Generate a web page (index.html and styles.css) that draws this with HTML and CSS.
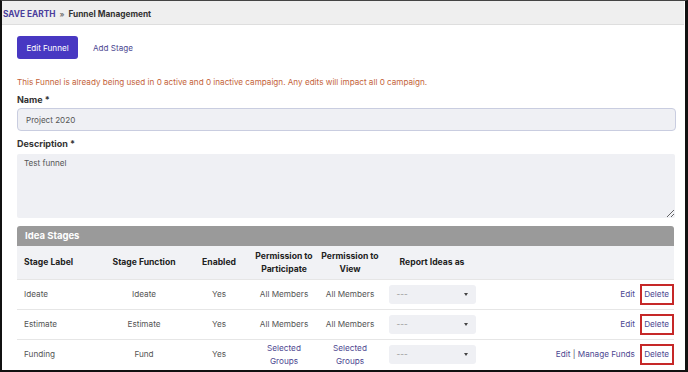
FILE: index.html
```html
<!DOCTYPE html>
<html lang="en">
<head>
  <meta charset="UTF-8" />
  <title>Funnel Management</title>
  <link rel="stylesheet" href="styles.css">
</head>
<body>
  <div class="frame">
    <div class="crumbs">
      <a class="crumb-home">SAVE EARTH</a>
      <span class="crumb-sep">»</span>
      <span class="crumb-page">Funnel Management</span>
    </div>

    <div class="content">
      <div class="tabs">
        <button class="tab active">Edit Funnel</button>
        <a class="tab">Add Stage</a>
      </div>

      <p class="warning">This Funnel is already being used in 0 active and 0 inactive campaign. Any edits will impact all 0 campaign.</p>

      <label class="field-label">Name *</label>
      <input class="input" type="text" value="Project 2020">

      <label class="field-label desc-label">Description *</label>
      <textarea class="textarea">Test funnel</textarea>

      <div class="stages">
        <div class="stages-title">Idea Stages</div>
        <table class="stage-table">
          <colgroup>
            <col class="c-label">
            <col class="c-func">
            <col class="c-enabled">
            <col class="c-part">
            <col class="c-view">
            <col class="c-report">
            <col>
          </colgroup>
          <thead>
            <tr>
              <th class="left">Stage Label</th>
              <th>Stage Function</th>
              <th>Enabled</th>
              <th class="tight">Permission to Participate</th>
              <th class="tight">Permission to View</th>
              <th>Report Ideas as</th>
              <th></th>
            </tr>
          </thead>
          <tbody>
            <tr>
              <td class="left">Ideate</td>
              <td>Ideate</td>
              <td>Yes</td>
              <td>All Members</td>
              <td class="narrow">All Members</td>
              <td><div class="select">---<span class="caret"></span></div></td>
              <td class="actions"><a>Edit</a> <a class="delete">Delete</a></td>
            </tr>
            <tr>
              <td class="left">Estimate</td>
              <td>Estimate</td>
              <td>Yes</td>
              <td>All Members</td>
              <td class="narrow">All Members</td>
              <td><div class="select">---<span class="caret"></span></div></td>
              <td class="actions"><a>Edit</a> <a class="delete">Delete</a></td>
            </tr>
            <tr>
              <td class="left">Funding</td>
              <td>Fund</td>
              <td>Yes</td>
              <td><a>Selected Groups</a></td>
              <td class="narrow"><a>Selected Groups</a></td>
              <td><div class="select">---<span class="caret"></span></div></td>
              <td class="actions"><a>Edit</a> <span class="bar">|</span> <a>Manage Funds</a> <a class="delete">Delete</a></td>
            </tr>
          </tbody>
        </table>
      </div>
    </div>
  </div>
</body>
</html>
```

FILE: styles.css
```css
body {
  margin: 0;
  font-family: Inter, "Noto Sans", sans-serif;
  font-size: 8.2px;
  color: #555;
  background: white;
}
.frame {
  width: 688px;
  height: 372px;
  box-sizing: border-box;
  border: 2px solid #111;
  border-top: 1px solid #444;
  border-right-width: 3px;
  overflow: hidden;
}
a {
  color: #4d4891;
  cursor: pointer;
}
.crumbs {
  height: 20px;
  padding: 3px 0 0 1px;
  background: #efefef;
  border-bottom: 1px solid #dedede;
  display: flex;
  align-items: center;
  gap: 4px;
  font-weight: 700;
  font-size: 8.3px;
  margin-right: 1px;
}
.crumb-home {
  color: #4a3d9c;
}
.crumb-sep {
  color: #777;
  font-size: 7.5px;
}
.crumb-page {
  color: #333;
}
.content {
  padding: 11px 10px 0 15px;
}
.tabs {
  display: flex;
  align-items: center;
  gap: 15px;
}
.tab {
  font-family: inherit;
  font-size: 8.1px;
}
button.tab {
  width: 61px;
  height: 23px;
  border: none;
  border-radius: 3px;
  background: #4838c2;
  color: white;
}
.warning {
  margin: 17px 0 0;
  line-height: 12px;
  color: #c4633a;
  font-size: 8.15px;
}
.field-label {
  display: block;
  margin-top: 6px;
  line-height: 12px;
  font-weight: 700;
  color: #333;
  font-size: 9px;
}
.desc-label {
  margin-top: 7px;
}
.input {
  display: block;
  box-sizing: border-box;
  width: 659px;
  height: 23px;
  margin-top: 2px;
  padding: 0 8px;
  background: #eff0f4;
  border: 1px solid #c9cde0;
  border-radius: 4px;
  font-family: inherit;
  font-size: 8.1px;
  color: #555;
}
.textarea {
  display: block;
  box-sizing: border-box;
  width: 658px;
  height: 64px;
  margin-top: 4px;
  padding: 4px 7px;
  background: #eff0f4;
  border: none;
  border-radius: 2px;
  font-family: inherit;
  font-size: 8.1px;
  color: #555;
  resize: vertical;
}
.stages {
  margin-top: 8px;
  width: 657px;
}
.stages-title {
  height: 20px;
  background: #9a9a9a;
  border-radius: 3px 3px 0 0;
  color: white;
  font-weight: 700;
  font-size: 9.5px;
  line-height: 20px;
  padding-left: 8px;
}
.stage-table {
  width: 100%;
  border-collapse: collapse;
  table-layout: fixed;
}
.c-label { width: 87px; }
.c-func { width: 80px; }
.c-enabled { width: 70px; }
.c-part { width: 60px; }
.c-view { width: 72px; }
.c-report { width: 92px; }
.stage-table th {
  background: #f1f2f5;
  color: #222;
  font-weight: 700;
  font-size: 8.6px;
  height: 33px;
  padding: 0 4px;
  text-align: center;
  line-height: 13px;
}
.stage-table th.tight {
  padding: 0;
}
.stage-table td {
  text-align: center;
  height: 29px;
  padding: 0 2px;
  border-top: 1px solid #e6e6e6;
  line-height: 13px;
}
.stage-table td.narrow {
  padding: 0 6px;
}
.stage-table .left {
  text-align: left;
  padding-left: 7px;
}
.select {
  width: 87px;
  height: 19px;
  margin: 0 auto;
  box-sizing: border-box;
  background: #eff0f4;
  border-radius: 3px;
  display: flex;
  align-items: center;
  justify-content: space-between;
  padding: 0 8px;
  color: #999;
  text-align: left;
}
.caret {
  width: 0;
  height: 0;
  border-left: 2.5px solid transparent;
  border-right: 2.5px solid transparent;
  border-top: 3px solid #444;
}
.stage-table td.actions {
  text-align: right;
  padding-right: 0;
  white-space: nowrap;
}
.bar {
  color: #555;
}
.delete {
  display: inline-block;
  border: 2px solid #c62828;
  padding: 2px 3px 2px 2px;
  margin-left: 3px;
}
```
